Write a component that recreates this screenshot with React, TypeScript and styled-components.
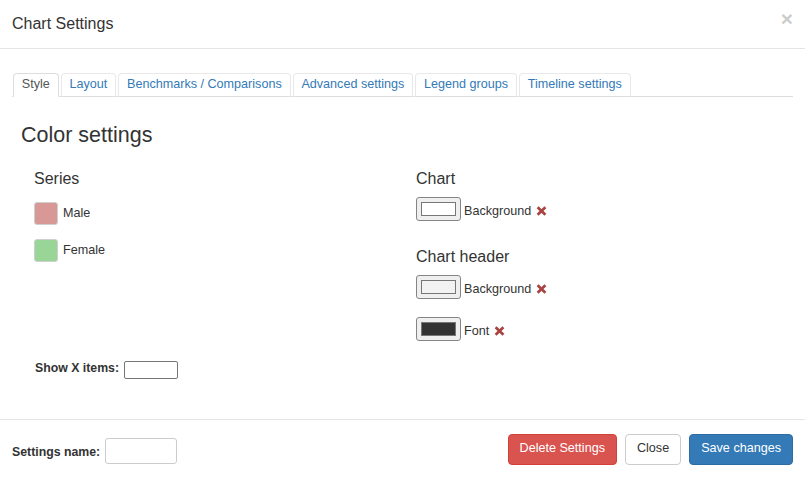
import React from "react";
import styled, { createGlobalStyle } from "styled-components";

const Global = createGlobalStyle`
  html, body { margin: 0; padding: 0; background: #fff; }
  body {
    font-family: "Liberation Sans", Arial, Helvetica, sans-serif;
    color: #333;
  }
  * { box-sizing: border-box; }
`;

const Modal = styled.div`
  width: 805px;
  background: #fff;
  display: flex;
  flex-direction: column;
`;

const Header = styled.div`
  display: flex;
  justify-content: space-between;
  align-items: flex-start;
  padding: 12px 12px 13px;
  border-bottom: 1px solid #e5e5e5;
`;

const Title = styled.h4`
  margin: 0;
  font-size: 16px;
  line-height: 23px;
  font-weight: normal;
  color: #333;
`;

const CloseX = styled.button`
  border: 0;
  background: none;
  padding: 0;
  margin-top: -4px;
  font-family: inherit;
  font-size: 21px;
  font-weight: bold;
  line-height: 1;
  color: #000;
  opacity: 0.2;
  cursor: pointer;
`;

const Body = styled.div`
  padding: 24px 12px 40px;
`;

const TabList = styled.ul`
  list-style: none;
  margin: 0;
  padding: 0 0 0 1px;
  display: flex;
  border-bottom: 1px solid #ddd;
`;

const Tab = styled.li<{ $active?: boolean }>`
  margin: 0 2px -1px 0;
  padding: 1px 7.85px 3px;
  font-size: 12.6px;
  line-height: 18px;
  white-space: nowrap;
  border: 1px solid ${(p) => (p.$active ? "#ddd" : "#e9e9e9")};
  border-bottom-color: ${(p) => (p.$active ? "#fff" : "transparent")};
  border-radius: 4px 4px 0 0;
  background: ${(p) => (p.$active ? "#fff" : "transparent")};
  color: ${(p) => (p.$active ? "#555" : "#337ab7")};
  cursor: pointer;
`;

const Content = styled.div`
  padding: 27px 8px 0 9px;
`;

const SectionTitle = styled.h3`
  margin: 0 0 22px;
  font-size: 21.5px;
  line-height: 1.1;
  font-weight: normal;
  color: #333;
`;

const Columns = styled.div`
  display: grid;
  grid-template-columns: 1fr 1fr;
`;

const Column = styled.div`
  padding-left: 13px;
  display: flex;
  flex-direction: column;
`;

const GroupTitle = styled.h4<{ $gap: number; $top?: number }>`
  margin: ${(p) => p.$top ?? 0}px 0 ${(p) => p.$gap}px;
  font-size: 16px;
  line-height: 1.1;
  font-weight: normal;
  color: #333;
`;

const SeriesList = styled.div`
  display: flex;
  flex-direction: column;
  gap: 14px;
`;

const SeriesRow = styled.div`
  display: flex;
  align-items: center;
  gap: 5px;
  height: 23px;
  font-size: 12.6px;
  line-height: 15px;
`;

const Swatch = styled.span<{ $color: string }>`
  width: 24px;
  height: 23px;
  border-radius: 3px;
  border: 1px solid #cfcfcf;
  background: ${(p) => p.$color};
`;

const ColorRow = styled.div<{ $top: number }>`
  display: flex;
  align-items: center;
  height: 24px;
  margin-top: ${(p) => p.$top}px;
  font-size: 12.6px;
  line-height: 15px;
`;

const ColorButton = styled.span`
  display: flex;
  width: 45px;
  height: 24px;
  padding: 4px;
  border: 1px solid #858585;
  border-radius: 3px;
  background: #efefef;
`;

const ColorFill = styled.span<{ $color: string }>`
  flex: 1;
  border: 1px solid #777;
  background: ${(p) => p.$color};
`;

const ColorLabel = styled.span`
  margin: 4px 0 0 3px;
`;

const RemoveIcon = styled.svg`
  margin: 3px 0 0 5px;
  flex: none;
`;

const ShowRow = styled.div`
  display: flex;
  align-items: flex-start;
  gap: 5px;
  margin-top: 19.5px;
  padding-left: 14px;
  font-size: 12.3px;
  font-weight: bold;
  line-height: 15px;
`;

const SmallInput = styled.input`
  width: 54px;
  height: 18px;
  margin: 0;
  padding: 0 2px;
  border: 1px solid #767676;
  border-radius: 2px;
  font-family: inherit;
`;

const Footer = styled.div`
  display: flex;
  justify-content: space-between;
  align-items: center;
  padding: 14px 12px 13px;
  border-top: 1px solid #e5e5e5;
`;

const NameGroup = styled.div`
  display: flex;
  align-items: center;
  gap: 5px;
  margin-top: 3px;
  font-size: 12.3px;
  font-weight: bold;
  line-height: 15px;
`;

const NameLabel = styled.span`
  padding-top: 3px;
`;

const NameInput = styled.input`
  width: 72px;
  height: 26px;
  margin: 0;
  padding: 0 6px;
  border: 1px solid #ccc;
  border-radius: 3px;
  font-family: inherit;
`;

const ButtonBar = styled.div`
  display: flex;
  gap: 8px;
`;

const variants = {
  danger: { bg: "#d9534f", border: "#d43f3a", color: "#fff" },
  default: { bg: "#fff", border: "#ccc", color: "#333" },
  primary: { bg: "#337ab7", border: "#2e6da4", color: "#fff" },
};

const Btn = styled.button<{ $variant: keyof typeof variants }>`
  margin: 0;
  padding: 5px 11px 7px;
  height: 31px;
  font-family: inherit;
  font-size: 12.6px;
  line-height: 17px;
  border-radius: 4px;
  border: 1px solid ${(p) => variants[p.$variant].border};
  background: ${(p) => variants[p.$variant].bg};
  color: ${(p) => variants[p.$variant].color};
  white-space: nowrap;
  cursor: pointer;
`;

const Remove = () => (
  <RemoveIcon width="11" height="10" viewBox="0 0 11 10">
    <path
      d="M1.6 1.2 L9.4 8.8 M9.4 1.2 L1.6 8.8"
      stroke="#a94442"
      strokeWidth="2.7"
      fill="none"
    />
  </RemoveIcon>
);

const tabs = [
  "Style",
  "Layout",
  "Benchmarks / Comparisons",
  "Advanced settings",
  "Legend groups",
  "Timeline settings",
];

const series = [
  { name: "Male", color: "#d89896" },
  { name: "Female", color: "#9ad598" },
];

export default function App() {
  return (
    <>
      <Global />
      <Modal>
        <Header>
          <Title>Chart Settings</Title>
          <CloseX aria-label="Close">×</CloseX>
        </Header>
        <Body>
          <TabList>
            {tabs.map((t, i) => (
              <Tab key={t} $active={i === 0}>
                {t}
              </Tab>
            ))}
          </TabList>
          <Content>
            <SectionTitle>Color settings</SectionTitle>
            <Columns>
              <Column>
                <GroupTitle $gap={15}>Series</GroupTitle>
                <SeriesList>
                  {series.map((s) => (
                    <SeriesRow key={s.name}>
                      <Swatch $color={s.color} />
                      <span>{s.name}</span>
                    </SeriesRow>
                  ))}
                </SeriesList>
              </Column>
              <Column>
                <GroupTitle $gap={10}>Chart</GroupTitle>
                <ColorRow $top={0}>
                  <ColorButton>
                    <ColorFill $color="#ffffff" />
                  </ColorButton>
                  <ColorLabel>Background</ColorLabel>
                  <Remove />
                </ColorRow>
                <GroupTitle $gap={10} $top={26.5}>
                  Chart header
                </GroupTitle>
                <ColorRow $top={0}>
                  <ColorButton>
                    <ColorFill $color="#f2f2f2" />
                  </ColorButton>
                  <ColorLabel>Background</ColorLabel>
                  <Remove />
                </ColorRow>
                <ColorRow $top={18}>
                  <ColorButton>
                    <ColorFill $color="#333333" />
                  </ColorButton>
                  <ColorLabel>Font</ColorLabel>
                  <Remove />
                </ColorRow>
              </Column>
            </Columns>
            <ShowRow>
              <span>Show X items:</span>
              <SmallInput type="text" />
            </ShowRow>
          </Content>
        </Body>
        <Footer>
          <NameGroup>
            <NameLabel>Settings name:</NameLabel>
            <NameInput type="text" />
          </NameGroup>
          <ButtonBar>
            <Btn $variant="danger">Delete Settings</Btn>
            <Btn $variant="default">Close</Btn>
            <Btn $variant="primary">Save changes</Btn>
          </ButtonBar>
        </Footer>
      </Modal>
    </>
  );
}
